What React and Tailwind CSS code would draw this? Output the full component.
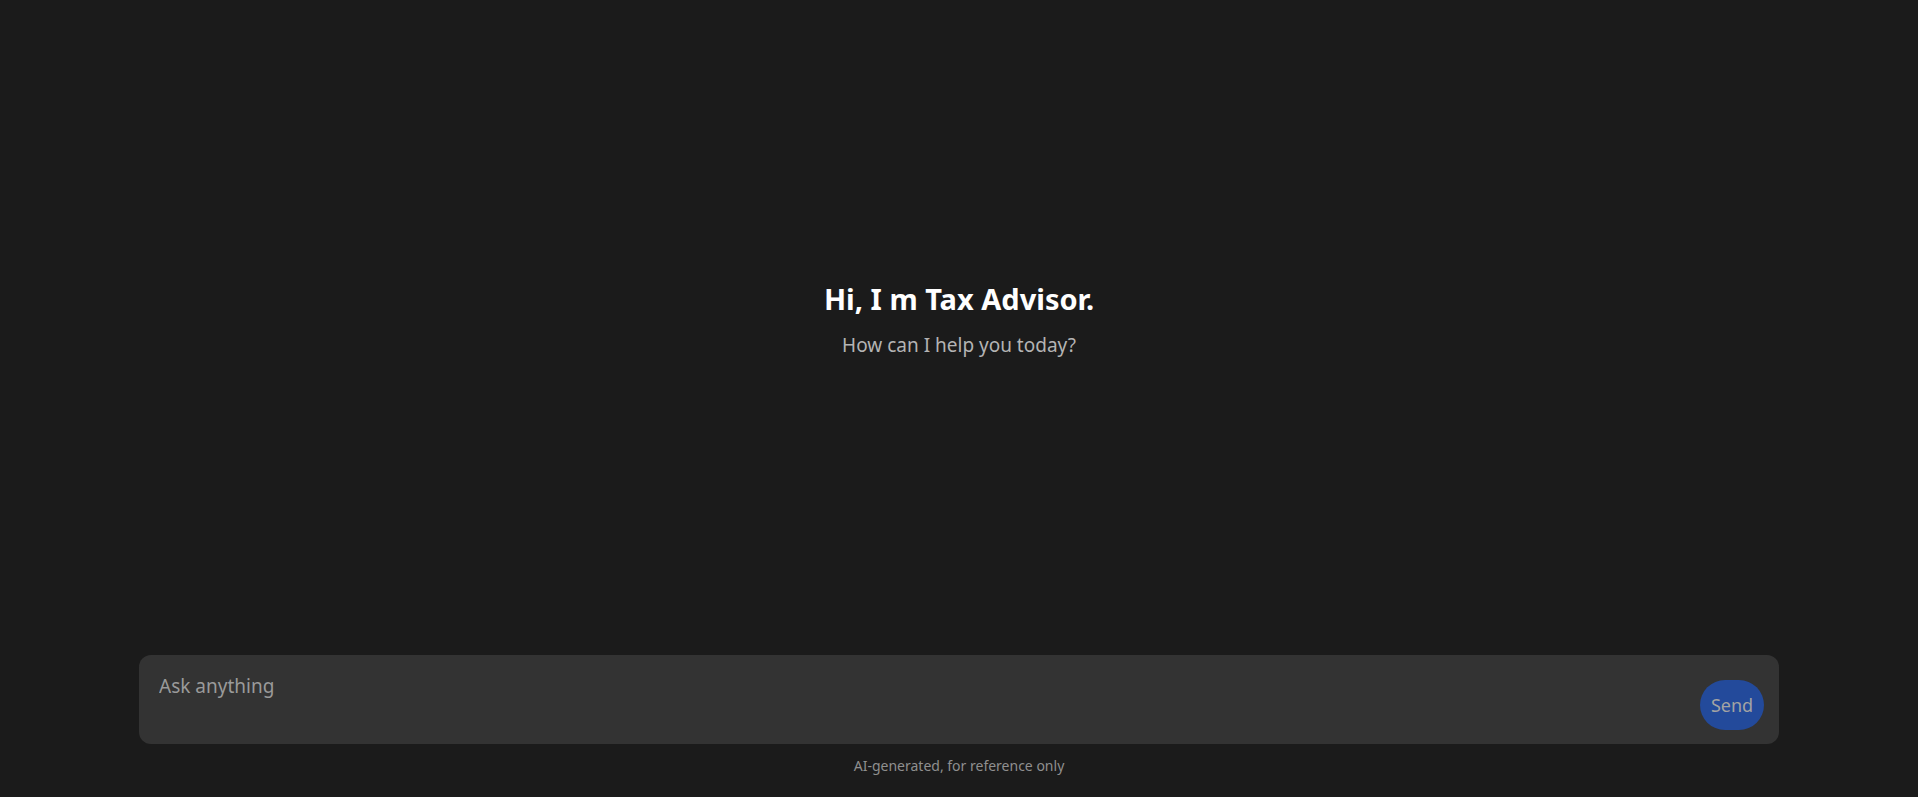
import React, { useState } from 'react';

const App = () => {
  const [text, setText] = useState('');

  return (
    <div
      className="w-full h-[797px] bg-[#1b1b1b] flex flex-col"
      style={{ fontFamily: '"Noto Sans", "Open Sans", sans-serif' }}
    >
      <div className="flex-1 flex flex-col items-center justify-center pb-[17px]">
        <h1 className="text-[29px] leading-[36px] font-bold text-white">Hi, I m Tax Advisor.</h1>
        <p className="mt-[15px] text-[19px] leading-[26px] text-[#b4b4b4]">How can I help you today?</p>
      </div>

      <div className="w-[1640px] mx-auto h-[89px] bg-[#333333] rounded-[12px] flex items-start justify-between pl-[20px] pr-[15px]">
        <textarea
          value={text}
          onChange={(e) => setText(e.target.value)}
          placeholder="Ask anything"
          className="flex-1 h-full pt-[18px] bg-transparent resize-none outline-none text-[19px] leading-[26px] text-white placeholder:text-[#9a9a9a]"
        />
        <button className="mt-[25px] w-[64px] h-[50px] rounded-full bg-[#234a9b] text-[#a3a3a3] text-[18px]">
          Send
        </button>
      </div>

      <p className="h-[53px] pt-[12px] text-center text-[14px] leading-[20px] text-[#8f8f8f]">
        AI-generated, for reference only
      </p>
    </div>
  );
};

export default App;
